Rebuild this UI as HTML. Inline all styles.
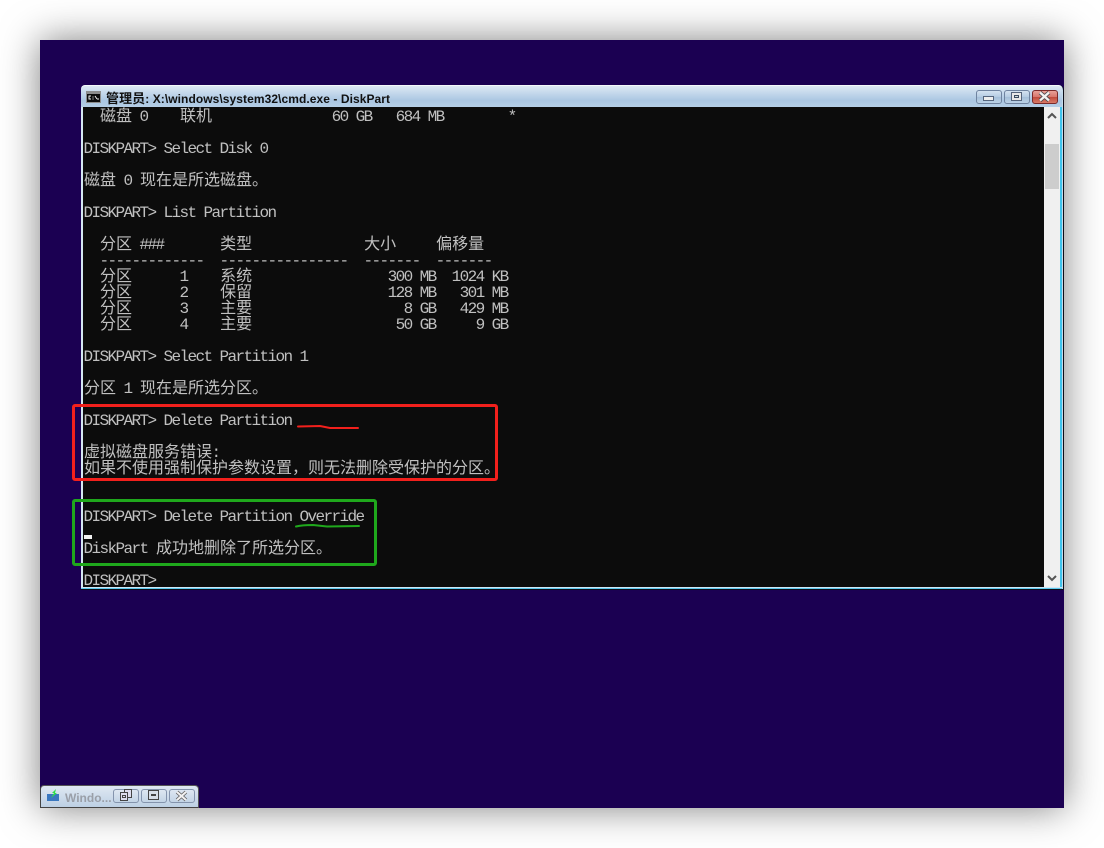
<!DOCTYPE html>
<html><head><meta charset="utf-8"><style>
html,body{margin:0;padding:0;width:1104px;height:848px;background:#fff;overflow:hidden}
#desk{position:absolute;left:40px;top:40px;width:1024px;height:768px;background:#1b0052;box-shadow:0 0 36px rgba(0,0,0,.5)}
.abs{position:absolute}
#win{position:absolute;left:81px;top:85px;width:983px;height:505px;box-sizing:border-box;background:#c5dcec;border-radius:5px 5px 0 0;border-right:1px solid #0d0d18;border-bottom:1px solid #0d0d18}
#tb{position:absolute;left:81px;top:85px;width:981px;height:22px;background:linear-gradient(#dce8f4,#aac6e2 70%,#b5cee6);border-top:1px solid #f4f8fb;box-sizing:border-box;border-radius:4px 4px 0 0}
#title{position:absolute;left:106px;top:91px;font:bold 12px/16px "Liberation Sans","Noto Sans CJK SC",sans-serif;color:#111;white-space:pre;letter-spacing:.07px}
#con{position:absolute;left:83px;top:107px;width:961px;height:480px;background:#0c0c0c;overflow:hidden}
#sb{position:absolute;left:1044px;top:107px;width:16px;height:480px;background:#f0f0f0}
#th{position:absolute;left:1045px;top:144px;width:14px;height:45px;background:#cdcdcd}
#edgeL{position:absolute;left:81px;top:107px;width:2px;height:482px;background:#d5e8f3}
#edgeR{position:absolute;left:1060px;top:107px;width:2px;height:482px;background:#3fc3ec}
#edgeB{position:absolute;left:81px;top:587px;width:981px;height:2px;background:linear-gradient(#d2e6f2 50%,#5cc9ee 50%)}
.r{position:absolute;left:83.5px;margin-top:1px;height:16px;line-height:16px;font-family:"Liberation Mono",monospace;font-size:16px;letter-spacing:-1.6px;color:#c0c0c0;white-space:pre}
.r b{font:400 16px/16px "Noto Sans CJK SC","WenQuanYi Zen Hei",sans-serif;letter-spacing:0;display:inline-block;vertical-align:top;position:relative;top:-3px;left:.5px}
.btn{position:absolute;top:90px;height:12px;width:24px;border:1px solid #6f83a0;border-radius:3px;background:linear-gradient(#d4e2f0,#b4cbe2 50%,#a5bfd9 51%,#bcd2e7);box-sizing:content-box}
#rb{position:absolute;left:72px;top:404px;width:426px;height:77px;box-sizing:border-box;border:3px solid #f2201c;border-radius:3px}
#gb{position:absolute;left:72px;top:499px;width:305px;height:67px;box-sizing:border-box;border:3px solid #1fa81c;border-radius:3px}
#cur{position:absolute;left:84px;top:535px;width:8px;height:4px;background:#f2f2f2}
#mini{position:absolute;left:40px;top:785px;width:159px;height:23px;box-sizing:border-box;background:linear-gradient(#dfe8f2,#bdd0e4);border:1px solid #555;border-bottom:1px solid #444;border-left:1px solid #444;border-radius:4px 4px 0 0}
.mb{position:absolute;top:789px;height:12px;width:24px;border:1px solid #8494ad;border-radius:3px;background:linear-gradient(#dde7f2,#c3d4e6)}
</style></head><body>
<div id="desk"></div>
<div id="win"></div>
<div id="tb"></div>
<svg class="abs" style="left:86px;top:91px" width="15" height="12"><rect width="15" height="12" fill="#8d8d8d"/><rect x="1" y="3" width="13" height="8" fill="#0c0c0c"/><path d="M5 5H3v3h2M7 5.500v1M7 7.500v1M9 5l2 3M11 8h2" stroke="#f0f0f0" fill="none"/></svg>
<div id="title"><span style="font-size:13px">管理员</span>: X:\windows\system32\cmd.exe - DiskPart</div>
<div class="btn" style="left:976px"></div>
<svg class="abs" style="left:982px;top:95px" width="14" height="8"><rect x="1.500" y="1.500" width="10" height="4" fill="#eee" stroke="#55647c"/></svg>
<div class="btn" style="left:1004px"></div>
<svg class="abs" style="left:1010px;top:92px" width="14" height="10"><rect x="1.500" y=".5" width="10" height="8" fill="#e8e8e8" stroke="#55647c"/><rect x="4.500" y="3.500" width="4" height="2" fill="#cdd" stroke="#3c4a60"/></svg>
<div class="btn" style="left:1032px;border-color:#7a2a2a;background:linear-gradient(#e8a098,#d8776c 50%,#c04a3c 51%,#d87a68)"></div>
<svg class="abs" style="left:1037px;top:90px" width="15" height="13"><path d="M3 2.500l9 8M12 2.500l-9 8" stroke="#4a4a50" stroke-width="4"/><path d="M3 2.500l9 8M12 2.500l-9 8" stroke="#f2f2f2" stroke-width="2.400"/></svg>
<div id="edgeL"></div><div id="edgeR"></div><div id="edgeB"></div>
<div id="con"></div>
<div id="sb"></div><div id="th"></div>
<svg class="abs" style="left:1046px;top:111px" width="12" height="9"><path d="M2 7l4-4 4 4" stroke="#555" stroke-width="2" fill="none"/></svg>
<svg class="abs" style="left:1046px;top:574px" width="12" height="9"><path d="M2 2l4 4 4-4" stroke="#555" stroke-width="2" fill="none"/></svg>

<div class="r" style="top:108px">  <b>磁盘</b> 0    <b>联机</b>               60 GB   684 MB        *</div>
<div class="r" style="top:140px">DISKPART&gt; Select Disk 0</div>
<div class="r" style="top:172px"><b>磁盘</b> 0 <b>现在是所选磁盘。</b></div>
<div class="r" style="top:204px">DISKPART&gt; List Partition</div>
<div class="r" style="top:236px">  <b>分区</b> ###       <b>类型</b>              <b>大小</b>     <b>偏移量</b></div>
<div class="r" style="top:252px">  -------------  ----------------  -------  -------</div>
<div class="r" style="top:268px">  <b>分区</b>      1    <b>系统</b>                 300 MB  1024 KB</div>
<div class="r" style="top:284px">  <b>分区</b>      2    <b>保留</b>                 128 MB   301 MB</div>
<div class="r" style="top:300px">  <b>分区</b>      3    <b>主要</b>                   8 GB   429 MB</div>
<div class="r" style="top:316px">  <b>分区</b>      4    <b>主要</b>                  50 GB     9 GB</div>
<div class="r" style="top:348px">DISKPART&gt; Select Partition 1</div>
<div class="r" style="top:380px"><b>分区</b> 1 <b>现在是所选分区。</b></div>
<div class="r" style="top:412px">DISKPART&gt; Delete Partition</div>
<div class="r" style="top:444px"><b>虚拟磁盘服务错误</b>:</div>
<div class="r" style="top:460px"><b>如果不使用强制保护参数设置&#xFF0C;则无法删除受保护的分区。</b></div>
<div class="r" style="top:508px">DISKPART&gt; Delete Partition Override</div>
<div id="cur"></div>
<div class="r" style="top:540px">DiskPart <b>成功地删除了所选分区。</b></div>
<div class="r" style="top:572px">DISKPART&gt;</div>

<div id="rb"></div><div id="gb"></div>
<svg class="abs" style="left:290px;top:420px" width="80" height="110" fill="none" stroke-linecap="round" stroke-width="2">
<path d="M8 6.500L30 6l10 2H68" stroke="#f2201c"/>
<path d="M6 106.500c6-1.500 12-1.500 17-1.500l14 1.500L69 106" stroke="#1fa81c"/>
</svg>

<div id="mini"></div>
<svg class="abs" style="left:47px;top:789px" width="13" height="12"><rect x="0" y="5" width="12" height="7" fill="#3a78c0"/><path d="M9 0L5 4h2L4 9l6-5H8z" fill="#2ee04a"/></svg>
<div class="abs" style="left:65px;top:790px;font:bold 12px/16px 'Liberation Sans',sans-serif;color:#9a9fa8">Windo...</div>
<div class="mb" style="left:113px"></div>
<svg class="abs" style="left:119px;top:789px" width="14" height="14" fill="#dde" stroke="#444"><rect x="5.500" y=".5" width="7" height="8"/><rect x="1.500" y="3.500" width="7" height="8"/><rect x="3.500" y="6.500" width="3" height="2" fill="none"/></svg>
<div class="mb" style="left:141px"></div>
<svg class="abs" style="left:147px;top:790px" width="13" height="11"><rect x="1.500" y=".5" width="10" height="9" fill="#d8dfe8" stroke="#444"/><rect x="4.500" y="4.500" width="4" height="1" stroke="#444" fill="none"/></svg>
<div class="mb" style="left:169px"></div>
<svg class="abs" style="left:174px;top:790px" width="15" height="12"><path d="M3 2l9 8M12 2l-9 8" stroke="#666" stroke-width="3.600"/><path d="M3 2l9 8M12 2l-9 8" stroke="#f2f2f2" stroke-width="2"/></svg>
</body></html>
